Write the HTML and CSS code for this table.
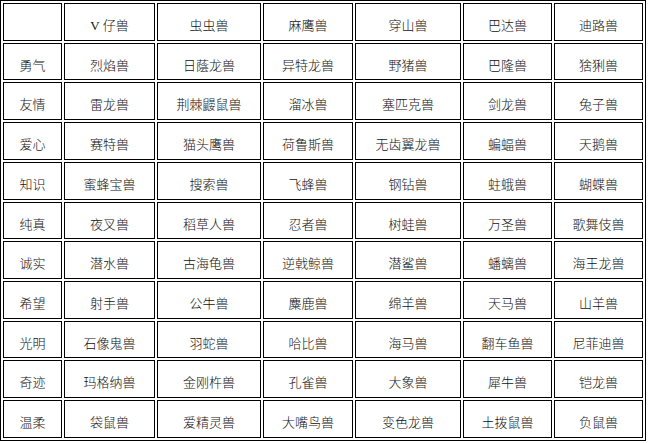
FILE: index.html
```html
<!DOCTYPE html>
<html lang="zh">
<head>
<meta charset="utf-8">
<link rel="stylesheet" href="styles.css">
</head>
<body>
<table class="grid">
<colgroup>
<col class="c1"><col class="c2"><col class="c3"><col class="c4"><col class="c5"><col class="c6"><col class="c7">
</colgroup>
<tbody>
<tr><td></td><td>V 仔兽</td><td>虫虫兽</td><td>麻鹰兽</td><td>穿山兽</td><td>巴达兽</td><td>迪路兽</td></tr>
<tr><td>勇气</td><td>烈焰兽</td><td>日蔭龙兽</td><td>异特龙兽</td><td>野猪兽</td><td>巴隆兽</td><td>猞猁兽</td></tr>
<tr><td>友情</td><td>雷龙兽</td><td>荆棘鼹鼠兽</td><td>溜冰兽</td><td>塞匹克兽</td><td>剑龙兽</td><td>兔子兽</td></tr>
<tr><td>爱心</td><td>赛特兽</td><td>猫头鹰兽</td><td>荷鲁斯兽</td><td>无齿翼龙兽</td><td>蝙蝠兽</td><td>天鹅兽</td></tr>
<tr><td>知识</td><td>蜜蜂宝兽</td><td>搜索兽</td><td>飞蜂兽</td><td>钢钻兽</td><td>蛀蛾兽</td><td>蝴蝶兽</td></tr>
<tr><td>纯真</td><td>夜叉兽</td><td>稻草人兽</td><td>忍者兽</td><td>树蛙兽</td><td>万圣兽</td><td>歌舞伎兽</td></tr>
<tr><td>诚实</td><td>潜水兽</td><td>古海龟兽</td><td>逆戟鲸兽</td><td>潜鲨兽</td><td>蟠螭兽</td><td>海王龙兽</td></tr>
<tr><td>希望</td><td>射手兽</td><td>公牛兽</td><td>麋鹿兽</td><td>绵羊兽</td><td>天马兽</td><td>山羊兽</td></tr>
<tr><td>光明</td><td>石像鬼兽</td><td>羽蛇兽</td><td>哈比兽</td><td>海马兽</td><td>翻车鱼兽</td><td>尼菲迪兽</td></tr>
<tr><td>奇迹</td><td>玛格纳兽</td><td>金刚杵兽</td><td>孔雀兽</td><td>大象兽</td><td>犀牛兽</td><td>铠龙兽</td></tr>
<tr><td>温柔</td><td>袋鼠兽</td><td>爱精灵兽</td><td>大嘴鸟兽</td><td>变色龙兽</td><td>土拨鼠兽</td><td>负鼠兽</td></tr>
</tbody>
</table>
</body>
</html>
```
FILE: styles.css
```css
html, body {
  margin: 0;
  padding: 0;
  background: #fff;
}
.grid {
  table-layout: fixed;
  border-collapse: separate;
  border-spacing: 2px;
  border: 1px solid #000;
  width: 646px;
  font-family: "Liberation Serif", "Noto Sans CJK SC", serif;
  font-size: 13px;
  color: #111;
}
.c1 { width: 59px; }
.c2 { width: 91px; }
.c3 { width: 104px; }
.c4 { width: 90px; }
.c5 { width: 106px; }
.c6 { width: 89px; }
.c7 { width: 89px; }
.grid td {
  box-sizing: border-box;
  border: 1px solid #000;
  height: 37.73px;
  padding: 13px 0 0 0;
  line-height: 18px;
  text-align: center;
  vertical-align: top;
  white-space: nowrap;
  font-weight: 300;
}
```
